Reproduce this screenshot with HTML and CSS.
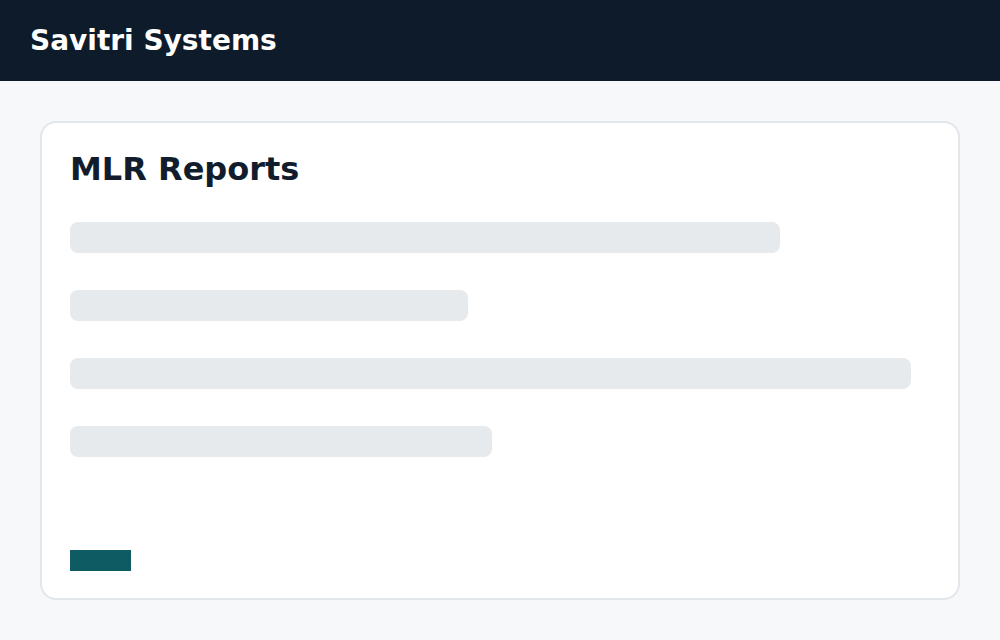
FILE: index.html
```html
<!DOCTYPE html>
<html lang="en">
<head>
  <meta charset="UTF-8">
  <meta name="viewport" content="width=device-width, initial-scale=1.0">
  <title>Savitri Systems — MLR Reports</title>
  <link rel="stylesheet" href="styles.css">
</head>
<body>
  <header class="topbar">
    <div class="brand">Savitri Systems</div>
  </header>

  <main>
    <section class="card">
      <h1>MLR Reports</h1>
      <div class="skeleton">
        <div class="line line-1"></div>
        <div class="line line-2"></div>
        <div class="line line-3"></div>
        <div class="line line-4"></div>
      </div>
      <button class="action" aria-label="Loading"></button>
    </section>
  </main>
</body>
</html>
```

FILE: styles.css
```css
html, body {
  margin: 0;
  padding: 0;
  font-family: "DejaVu Sans", Verdana, sans-serif;
  background-color: #f7f8fa;
  color: #111c2c;
}

.topbar {
  height: 81px;
  background-color: #0e1b2b;
  display: flex;
  align-items: center;
  padding: 0 30px;
  box-sizing: border-box;
}

.brand {
  color: #ffffff;
  font-weight: bold;
  font-size: 28px;
}

main {
  padding: 40px;
}

.card {
  height: 479px;
  box-sizing: border-box;
  background-color: #ffffff;
  border: 2px solid #e2e6ea;
  border-radius: 16px;
  padding: 27px 28px;
  display: flex;
  flex-direction: column;
}

h1 {
  margin: 0 0 34px;
  font-size: 32px;
  font-weight: bold;
  color: #111c2c;
}

.skeleton {
  display: flex;
  flex-direction: column;
  gap: 37px;
}

.line {
  height: 31px;
  border-radius: 8px;
  background-color: #e7eaed;
}

.line-1 { width: 710px; }
.line-2 { width: 398px; }
.line-3 { width: 841px; }
.line-4 { width: 422px; }

.action {
  margin-top: auto;
  width: 61px;
  height: 21px;
  padding: 0;
  border: none;
  border-radius: 0;
  background-color: #0f5b63;
}
```
